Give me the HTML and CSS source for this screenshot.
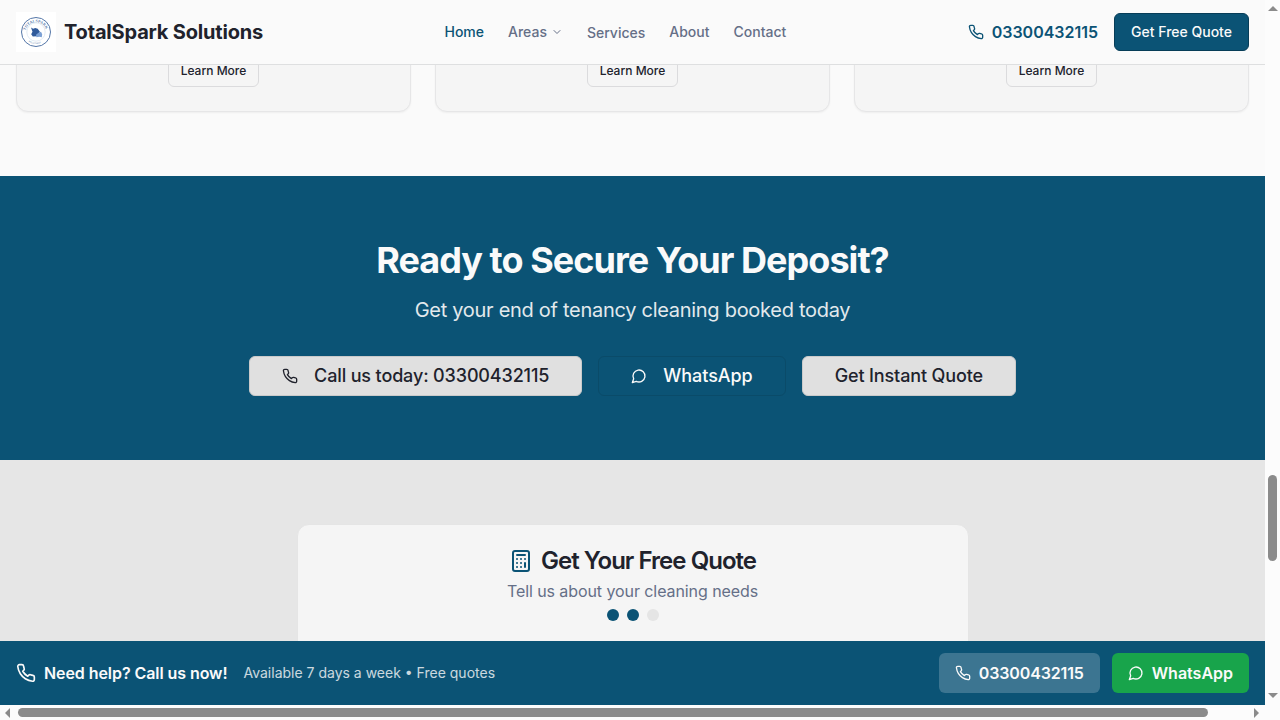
FILE: index.html
```html
<!DOCTYPE html>
<html lang="en">
<head>
<meta charset="utf-8">
<title>TotalSpark Solutions</title>
<link rel="stylesheet" href="styles.css">
</head>
<body>
<svg class="defs" width="0" height="0">
  <symbol id="phone" viewBox="0 0 24 24"><path d="M22 16.92v3a2 2 0 0 1-2.18 2 19.79 19.79 0 0 1-8.63-3.07 19.5 19.5 0 0 1-6-6 19.79 19.79 0 0 1-3.07-8.67A2 2 0 0 1 4.11 2h3a2 2 0 0 1 2 1.72 12.84 12.84 0 0 0 .7 2.81 2 2 0 0 1-.45 2.11L8.09 9.91a16 16 0 0 0 6 6l1.27-1.27a2 2 0 0 1 2.11-.45 12.84 12.84 0 0 0 2.81.7A2 2 0 0 1 22 16.92z"/></symbol>
  <symbol id="chat" viewBox="0 0 24 24"><path d="M7.9 20A9 9 0 1 0 4 16.1L2 22Z"/></symbol>
</svg>
<div class="window">
  <div class="view">
    <header class="header">
      <a class="brand">
        <svg class="logo" viewBox="0 0 40 40">
          <rect width="40" height="40" fill="#fff"/>
          <circle cx="20" cy="20" r="14.5" fill="none" stroke="#5577a8" stroke-width="1"/>
          <circle cx="20" cy="20" r="9.2" fill="none" stroke="#dbe4f0" stroke-width=".8"/>
          <path id="arc" d="M9.6 18.5A10.7 10.7 0 0 1 30.4 18.5" fill="none"/>
          <path id="arc-low" d="M12.5 29.4A12.5 12.5 0 0 0 27.5 29.4" fill="none"/>
          <text class="logo-name"><textPath href="#arc" textLength="27">TOTALSPARK</textPath></text>
          <text class="logo-sub"><textPath href="#arc-low" textLength="13">SOLUTIONS</textPath></text>
          <path d="M15 15.5l2.2 1.2 2-.7 2.5.8 2.2 3-2.8 4.5-4.3.3-1.6-2.3 1.3-2.5z" fill="#315b9b"/>
          <path d="M20 22.7l2.5-2 2.5-1 1.2 2.5-.4 3-2.6-.4-2.7.4z" fill="#7ca1d5"/>
        </svg>
        <span class="brand-name">TotalSpark Solutions</span>
      </a>
      <nav class="nav">
        <a class="nav-link active">Home</a>
        <a class="nav-link">Areas<svg class="chevron" viewBox="0 0 24 24"><path d="m6 9 6 6 6-6"/></svg></a>
        <a class="nav-link services">Services</a>
        <a class="nav-link">About</a>
        <a class="nav-link">Contact</a>
      </nav>
      <div class="header-actions">
        <a class="header-phone"><svg class="icon"><use href="#phone"/></svg>03300432115</a>
        <a class="quote-button">Get Free Quote</a>
      </div>
    </header>
    <main class="main">
      <section class="cards">
        <article class="card"><a class="learn">Learn More</a></article>
        <article class="card"><a class="learn">Learn More</a></article>
        <article class="card"><a class="learn">Learn More</a></article>
      </section>
      <section class="cta">
        <h2 class="cta-title">Ready to Secure Your Deposit?</h2>
        <p class="cta-text">Get your end of tenancy cleaning booked today</p>
        <div class="cta-buttons">
          <a class="cta-button"><svg class="icon"><use href="#phone"/></svg>Call us today: 03300432115</a>
          <a class="cta-button outline"><svg class="icon"><use href="#chat"/></svg>WhatsApp</a>
          <a class="cta-button">Get Instant Quote</a>
        </div>
      </section>
      <section class="quote">
        <div class="quote-card">
          <h3 class="quote-title"><svg class="calculator" viewBox="0 0 24 24"><rect width="16" height="20" x="4" y="2" rx="2"/><path d="M8 6h8M16 14v4M16 10h.01M12 10h.01M8 10h.01M12 14h.01M8 14h.01M12 18h.01M8 18h.01"/></svg>Get Your Free Quote</h3>
          <p class="quote-text">Tell us about your cleaning needs</p>
          <div class="steps"><span class="step done"></span><span class="step done"></span><span class="step"></span></div>
        </div>
      </section>
    </main>
    <aside class="help">
      <svg class="icon large"><use href="#phone"/></svg>
      <strong class="help-title">Need help? Call us now!</strong>
      <span class="help-text">Available 7 days a week • Free quotes</span>
      <a class="help-button number"><svg class="icon"><use href="#phone"/></svg>03300432115</a>
      <a class="help-button green"><svg class="icon"><use href="#chat"/></svg>WhatsApp</a>
    </aside>
  </div>
  <div class="scroll-y"><i class="arrow up"></i><i class="thumb-y"></i><i class="arrow down"></i></div>
  <div class="scroll-x"><i class="arrow left"></i><i class="thumb-x"></i><i class="arrow right"></i></div>
</div>
</body>
</html>
```
FILE: styles.css
```css
* { box-sizing: border-box; }
body { margin: 0; overflow: hidden; background: #fafafa; color: #20222c; font: 16px/24px Inter, sans-serif; }
h2, h3, p { margin: 0; }
.defs { position: absolute; }
.window { display: grid; grid-template: 705px 15px / 1265px 15px; background: #fcfcfc; }
.view { display: flex; flex-direction: column; min-height: 0; overflow: hidden; background: #fafafa; }
.icon { width: 16px; height: 16px; flex: none; fill: none; stroke: currentColor; stroke-width: 2; stroke-linecap: round; stroke-linejoin: round; }
.icon.large { width: 20px; height: 20px; }

.header { position: relative; z-index: 2; flex: none; height: 65px; padding: 0 16px; display: flex; align-items: center; justify-content: space-between; background: #fafafa; border-bottom: 1px solid #dedfe0; }
.brand { display: flex; align-items: center; gap: 8px; }
.logo { width: 40px; height: 40px; }
.logo-name { font: 600 4px "Liberation Serif", serif; fill: #6180ad; }
.logo-sub { font: 600 2px "Liberation Serif", serif; fill: #6180ad; }
.brand-name { font-size: 20px; line-height: 28px; font-weight: 700; letter-spacing: -.18px; }
.nav { display: flex; align-items: center; gap: 24px; font-size: 14px; line-height: 20px; font-weight: 500; color: #656f87; }
.nav-link { display: flex; align-items: center; }
.nav-link.active { color: #0b5375; }
.services { padding-top: 2px; }
.chevron { width: 12px; height: 12px; margin-left: 4px; fill: none; stroke: currentColor; stroke-width: 2; stroke-linecap: round; stroke-linejoin: round; }
.header-actions { display: flex; align-items: center; gap: 16px; }
.header-phone { display: flex; align-items: center; gap: 8px; font-weight: 600; color: #0b5375; }
.quote-button { height: 38px; padding: 0 16px; border: 1px solid #073d58; border-radius: 6px; background: #0b5375; color: #fafafa; font-size: 14px; line-height: 36px; font-weight: 500; }

.main { flex: 1; min-height: 0; overflow: visible; }
.cards { display: grid; grid-template-columns: repeat(3, 1fr); gap: 24px; margin-top: -35px; padding: 0 16px 64px; }
.card { display: flex; justify-content: center; align-items: flex-end; height: 82px; padding-bottom: 24px; border: 1px solid #e6e6e7; border-radius: 12px; background: #f5f5f5; box-shadow: 0 1px 2px rgba(0, 0, 0, .05); }
.learn { height: 32px; padding: 0 12px; border: 1px solid #dbdbdd; border-radius: 6px; font-size: 12px; line-height: 30px; font-weight: 500; }

.cta { padding: 64px 16px; text-align: center; background: #0b5375; color: #fafafa; }
.cta-title { margin-bottom: 16px; font-size: 36px; line-height: 40px; font-weight: 700; letter-spacing: -.96px; }
.cta-text { margin-bottom: 32px; font-size: 20px; line-height: 28px; letter-spacing: -.285px; opacity: .9; }
.cta-buttons { display: flex; justify-content: center; gap: 16px; }
.cta-button { display: flex; align-items: center; gap: 16px; height: 40px; padding: 0 32px; border: 1px solid #cacaca; border-radius: 6px; background: #e0e0e0; color: #20222c; font-size: 18px; font-weight: 500; letter-spacing: -.14px; }
.cta-button.outline { border-color: #0a4b69; background: transparent; color: #fafafa; letter-spacing: -.05px; }

.quote { height: 260px; padding-top: 64px; background: #e6e6e6; }
.quote-card { display: flex; flex-direction: column; align-items: center; width: 672px; height: 300px; margin: 0 auto; padding-top: 24px; border: 1px solid #e5e5e5; border-radius: 12px; background: #f5f5f5; }
.quote-title { display: flex; align-items: center; gap: 8px; font-size: 24px; line-height: 24px; font-weight: 600; letter-spacing: -.97px; }
.calculator { width: 24px; height: 24px; fill: none; stroke: #0b5375; stroke-width: 2; stroke-linecap: round; stroke-linejoin: round; }
.quote-text { margin-top: 6px; color: #656f87; letter-spacing: -.08px; }
.steps { display: flex; gap: 8px; margin-top: 6px; }
.step { width: 12px; height: 12px; border-radius: 50%; background: #e5e5e5; }
.step.done { background: #0b5375; }

.help { position: relative; z-index: 2; flex: none; display: flex; align-items: center; height: 64px; padding: 0 16px; background: #0b5375; color: #fafafa; }
.help-title { margin: 0 16px 0 8px; font-weight: 600; letter-spacing: -.07px; }
.help-text { margin-right: auto; font-size: 14px; line-height: 20px; opacity: .8; }
.help-button { display: flex; align-items: center; gap: 8px; height: 40px; padding: 0 16px; border-radius: 6px; background: #3c7591; font-weight: 600; }
.help-button.number { letter-spacing: -.13px; }
.help-button.green { margin-left: 12px; background: #18a44b; }

.scroll-y { display: flex; flex-direction: column; align-items: center; padding: 6px 0 7px; }
.scroll-x { display: flex; align-items: center; padding: 0 6px 0 5px; width: 1265px; }
.thumb-y { width: 9px; height: 86px; margin-top: 464px; border-radius: 5px; background: #8b8b8b; }
.thumb-x { width: 1190px; height: 9px; margin-left: 8px; border-radius: 5px; background: #8b8b8b; }
.arrow { width: 0; height: 0; border: 0 solid transparent; }
.up { border-width: 0 5px 5px; border-bottom-color: #8b8b8b; }
.down { margin-top: auto; border-width: 5px 5px 0; border-top-color: #8b8b8b; }
.left { border-width: 5px 5px 5px 0; border-right-color: #8b8b8b; }
.right { margin-left: auto; border-width: 5px 0 5px 5px; border-left-color: #8b8b8b; }
```
